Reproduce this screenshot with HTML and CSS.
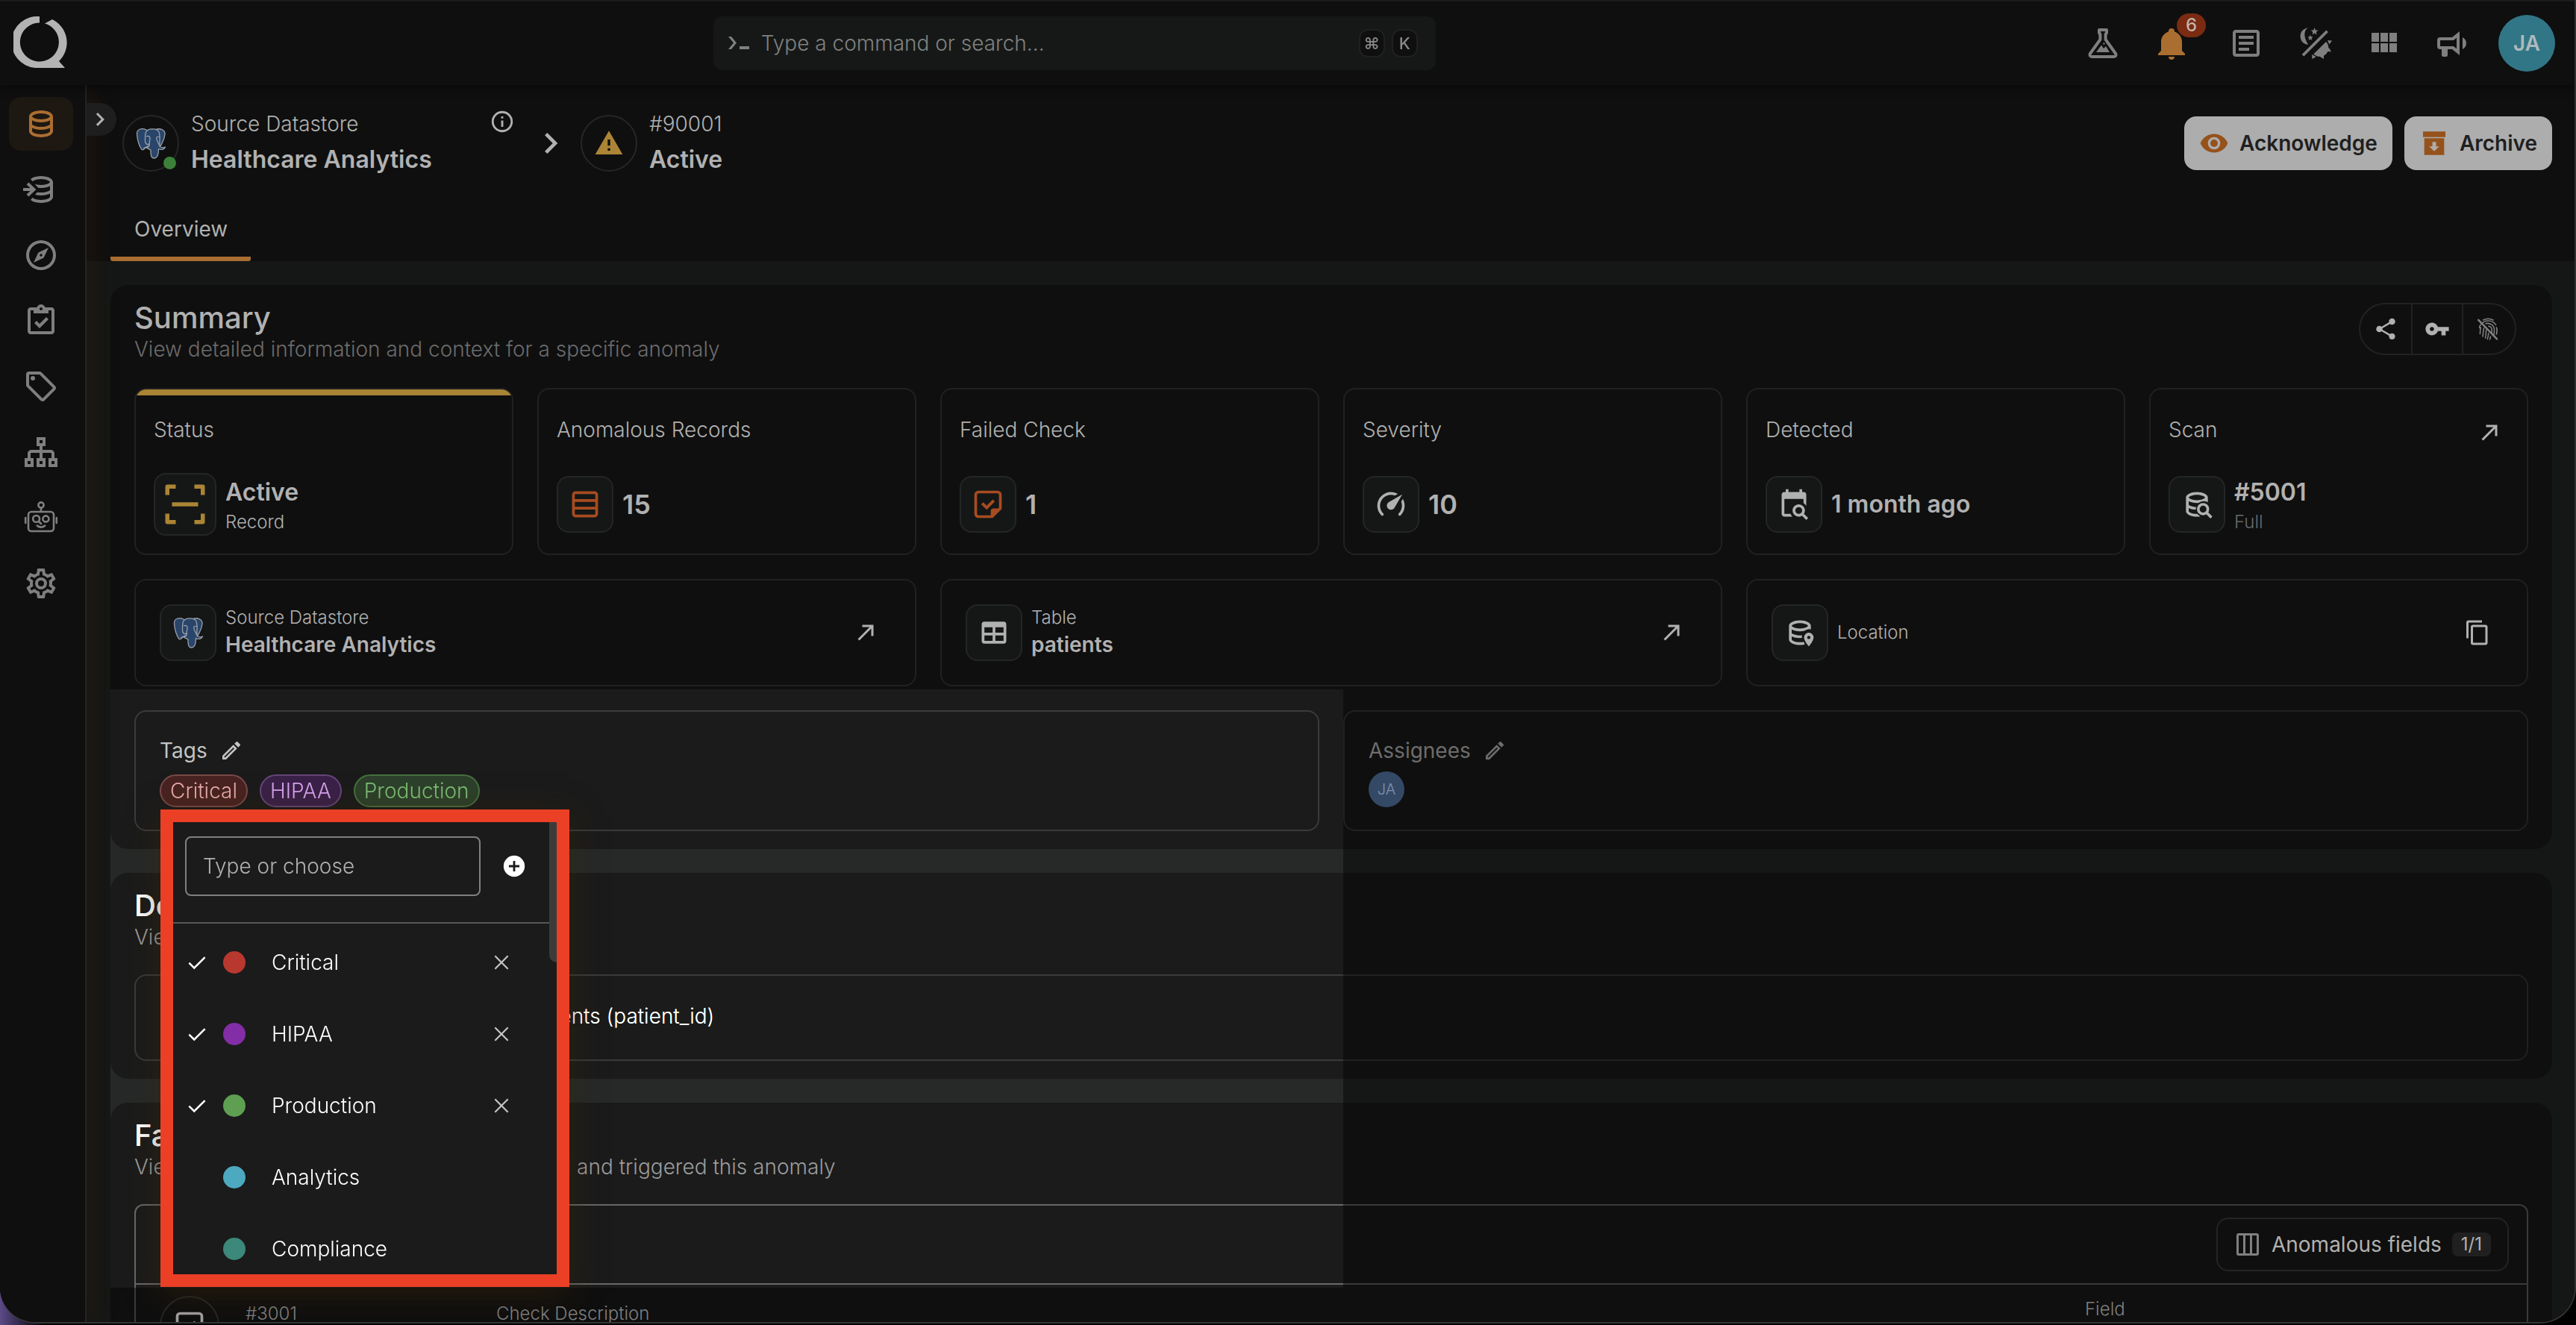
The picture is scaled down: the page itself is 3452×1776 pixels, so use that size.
FILE: index.html
```html
<!DOCTYPE html>
<html lang="en">
<head>
  <meta charset="UTF-8" />
  <meta name="viewport" content="width=device-width, initial-scale=1.0" />
  <title>Anomaly #90001</title>
  <link rel="stylesheet" href="styles.css">
</head>
<body>
  <!-- Icon sprite -->
  <svg class="sprite" aria-hidden="true">
    <symbol id="i-database" viewBox="0 0 24 24"><path d="M12 3C7.58 3 4 4.79 4 7V17C4 19.21 7.59 21 12 21S20 19.21 20 17V7C20 4.79 16.42 3 12 3M18 17C18 17.5 15.87 19 12 19S6 17.5 6 17V14.77C7.61 15.55 9.72 16 12 16S16.39 15.55 18 14.77V17M18 12.45C16.7 13.4 14.42 14 12 14C9.58 14 7.3 13.4 6 12.45V9.64C7.47 10.47 9.61 11 12 11C14.39 11 16.53 10.47 18 9.64V12.45M12 9C8.13 9 6 7.5 6 7S8.13 5 12 5C15.87 5 18 6.5 18 7S15.87 9 12 9Z"/></symbol>
    <symbol id="i-database-in" viewBox="0 0 24 24">
      <mask id="m-in"><rect width="24" height="24" fill="#fff"/><path d="M0 4.5L5 5L11 12L5 19L0 19.5Z" fill="#000"/></mask>
      <path mask="url(#m-in)" d="M12 3C7.58 3 4 4.79 4 7V17C4 19.21 7.59 21 12 21S20 19.21 20 17V7C20 4.79 16.42 3 12 3M18 17C18 17.5 15.87 19 12 19S6 17.5 6 17V14.77C7.61 15.55 9.72 16 12 16S16.39 15.55 18 14.77V17M18 12.45C16.7 13.4 14.42 14 12 14C9.58 14 7.3 13.4 6 12.45V9.64C7.47 10.47 9.61 11 12 11C14.39 11 16.53 10.47 18 9.64V12.45M12 9C8.13 9 6 7.5 6 7S8.13 5 12 5C15.87 5 18 6.5 18 7S15.87 9 12 9Z"/>
      <path d="M0 11H4.8L2.3 8.7L3.7 7.3L8.7 12L3.7 16.7L2.3 15.3L4.8 13H0Z"/>
    </symbol>
    <symbol id="i-compass" viewBox="0 0 24 24"><path d="M7,17L10.2,10.2L17,7L13.8,13.8L7,17M12,11.1A0.9,0.9 0 0,0 11.1,12A0.9,0.9 0 0,0 12,12.9A0.9,0.9 0 0,0 12.9,12A0.9,0.9 0 0,0 12,11.1M12,2A10,10 0 0,1 22,12A10,10 0 0,1 12,22A10,10 0 0,1 2,12A10,10 0 0,1 12,2M12,4A8,8 0 0,0 4,12A8,8 0 0,0 12,20A8,8 0 0,0 20,12A8,8 0 0,0 12,4Z"/></symbol>
    <symbol id="i-clipboard" viewBox="0 0 24 24"><path d="M19 3H14.82C14.4 1.84 13.3 1 12 1S9.6 1.84 9.18 3H5C3.9 3 3 3.9 3 5V19C3 20.1 3.9 21 5 21H19C20.1 21 21 20.1 21 19V5C21 3.9 20.1 3 19 3M12 3C12.55 3 13 3.45 13 4S12.55 5 12 5 11 4.55 11 4 11.45 3 12 3M7 7H17V5H19V19H5V5H7V7M7.5 13.5L9 12L11 14L15.5 9.5L17 11L11 17L7.5 13.5Z"/></symbol>
    <symbol id="i-tag" viewBox="0 0 24 24"><path d="M21.41 11.58L12.41 2.58A2 2 0 0 0 11 2H4A2 2 0 0 0 2 4V11A2 2 0 0 0 2.59 12.42L11.59 21.42A2 2 0 0 0 13 22A2 2 0 0 0 14.41 21.41L21.41 14.41A2 2 0 0 0 22 13A2 2 0 0 0 21.41 11.58M13 20L4 11V4H11L20 13M6.5 5A1.5 1.5 0 1 1 5 6.5A1.5 1.5 0 0 1 6.5 5Z"/></symbol>
    <symbol id="i-sitemap" viewBox="0 0 24 24"><path fill="none" stroke="currentColor" stroke-width="2" d="M10 3H14V7H10ZM2 17H6V21H2ZM10 17H14V21H10ZM18 17H22V21H18ZM12 7V17M4 17V13A1.5 1.5 0 0 1 5.500 11.500H18.500A1.500 1.500 0 0 1 20 13V17"/></symbol>
    <symbol id="i-robot" viewBox="0 0 24 24"><g fill="none" stroke="currentColor" stroke-width="1.300"><rect x="3.500" y="8" width="17" height="13" rx="2"/><circle cx="12" cy="3.500" r="1.800"/><path d="M12 5.500V8M9.400 17.300Q12 19.300 14.600 17.300M1.600 12V15.500M22.400 12V15.500M10.500 14.500L12 16" stroke-linecap="round"/><circle cx="8.800" cy="12.700" r="2.200"/><circle cx="15.200" cy="12.700" r="2"/></g></symbol>
    <symbol id="i-cog" viewBox="0 0 24 24"><path d="M12,8A4,4 0 0,1 16,12A4,4 0 0,1 12,16A4,4 0 0,1 8,12A4,4 0 0,1 12,8M12,10A2,2 0 0,0 10,12A2,2 0 0,0 12,14A2,2 0 0,0 14,12A2,2 0 0,0 12,10M10,22C9.75,22 9.54,21.82 9.5,21.58L9.13,18.93C8.5,18.68 7.96,18.34 7.44,17.94L4.95,18.95C4.73,19.03 4.46,18.95 4.34,18.73L2.34,15.27C2.21,15.05 2.27,14.78 2.46,14.63L4.57,12.97L4.5,12L4.57,11L2.46,9.37C2.27,9.22 2.21,8.95 2.34,8.73L4.34,5.27C4.46,5.05 4.73,4.96 4.95,5.05L7.44,6.05C7.96,5.66 8.5,5.32 9.13,5.07L9.5,2.42C9.54,2.18 9.75,2 10,2H14C14.25,2 14.46,2.18 14.5,2.42L14.87,5.07C15.5,5.32 16.04,5.66 16.56,6.05L19.05,5.05C19.27,4.96 19.54,5.05 19.66,5.27L21.66,8.73C21.79,8.95 21.73,9.22 21.54,9.37L19.43,11L19.5,12L19.43,13L21.54,14.63C21.73,14.78 21.79,15.05 21.66,15.27L19.66,18.73C19.54,18.95 19.27,19.04 19.05,18.95L16.56,17.95C16.04,18.34 15.5,18.68 14.87,18.93L14.5,21.58C14.46,21.82 14.25,22 14,22H10M11.25,4L10.88,6.61C9.68,6.86 8.62,7.5 7.85,8.39L5.44,7.35L4.69,8.65L6.8,10.2C6.4,11.37 6.4,12.64 6.8,13.8L4.68,15.36L5.43,16.66L7.86,15.62C8.63,16.5 9.68,17.14 10.87,17.38L11.24,20H12.76L13.13,17.39C14.32,17.14 15.37,16.5 16.14,15.62L18.57,16.66L19.32,15.36L17.2,13.81C17.6,12.64 17.6,11.37 17.2,10.2L19.31,8.65L18.56,7.35L16.15,8.39C15.38,7.5 14.32,6.86 13.12,6.62L12.75,4H11.25Z"/></symbol>
    <symbol id="i-flask" viewBox="0 0 24 24"><path fill="none" stroke="currentColor" stroke-width="2" stroke-linejoin="round" d="M9.500 3H14.500V5L13.800 6V9.500L20.600 19A1.300 1.300 0 0 1 19.500 21H4.500A1.300 1.300 0 0 1 3.400 19L10.200 9.500V6L9.500 5Z"/><path d="M7.500 18L11 13.200L12.500 15.500L14 14L16.500 18Z"/><circle cx="12.700" cy="12.300" r=".6"/></symbol>
    <symbol id="i-bell" viewBox="0 0 24 24"><path d="M21,19V20H3V19L5,17V11C5,7.9 7.03,5.17 10,4.29C10,4.19 10,4.1 10,4A2,2 0 0,1 12,2A2,2 0 0,1 14,4C14,4.1 14,4.19 14,4.29C16.97,5.17 19,7.9 19,11V17L21,19M14,21A2,2 0 0,1 12,23A2,2 0 0,1 10,21"/></symbol>
    <symbol id="i-text-box" viewBox="0 0 24 24"><path d="M5,3C3.89,3 3,3.89 3,5V19C3,20.11 3.89,21 5,21H19C20.11,21 21,20.11 21,19V5C21,3.89 20.11,3 19,3H5M5,5H19V19H5V5M7,7V9H17V7H7M7,11V13H17V11H7M7,15V17H14V15H7Z"/></symbol>
    <symbol id="i-theme" viewBox="0 0 24 24"><path d="M19.600 3.200L21 4.500L4.700 20.800L3.300 19.500ZM7.500 1.800C4.500 3.200 4.300 8 7.600 12.800C4.500 12.800 2.300 10.300 2.300 7.200C2.300 4.200 4.600 1.900 7.500 1.800ZM11.800 1.500L12.500 3.200L14.300 3.300L12.900 4.500L13.300 6.200L11.800 5.300L10.300 6.200L10.700 4.500L9.300 3.300L11.100 3.200ZM9 6.300L9.500 7.600L10.900 7.700L9.800 8.600L10.200 10L9 9.200L7.800 10L8.200 8.600L7.100 7.700L8.500 7.600ZM19.500 11A5.600 5.600 0 0 1 11.200 19.200ZM20.500 10L23.500 10.200L21.700 12.800ZM21.500 15L23 17.800L19.900 17.300ZM10 19.500L12.800 21L10.300 22.600ZM15 20.700L18 19.200V22.500Z"/></symbol>
    <symbol id="i-module" viewBox="0 0 24 24"><path d="M16,5V11H21V5M10,11H15V5H10M16,18H21V12H16M10,18H15V12H10M4,18H9V12H4M4,11H9V5H4V11Z"/></symbol>
    <symbol id="i-bullhorn" viewBox="0 0 24 24"><path d="M12 8H4A2 2 0 0 0 2 10V14A2 2 0 0 0 4 16H5V20A1 1 0 0 0 6 21H8A1 1 0 0 0 9 20V16H12L17 20V4L12 8M15 15.6L13 14H4V10H13L15 8.4V15.6M21.5 12C21.5 13.71 20.54 15.26 19 16V8C20.53 8.75 21.5 10.3 21.5 12Z"/></symbol>
    <symbol id="i-chevron" viewBox="0 0 24 24"><path d="M8.59,16.58L13.17,12L8.59,7.41L10,6L16,12L10,18L8.59,16.58Z"/></symbol>
    <symbol id="i-info" viewBox="0 0 24 24"><circle cx="12" cy="12" r="9" fill="none" stroke="currentColor" stroke-width="2"/><path d="M11 7H13V9H11ZM11 11H13V17H11Z"/></symbol>
    <symbol id="i-alert" viewBox="0 0 24 24"><path d="M13 14H11V9H13M13 18H11V16H13M1 21H23L12 2L1 21Z"/></symbol>
    <symbol id="i-eye" viewBox="0 0 24 24"><path d="M12,9A3,3 0 0,0 9,12A3,3 0 0,0 12,15A3,3 0 0,0 15,12A3,3 0 0,0 12,9M12,17A5,5 0 0,1 7,12A5,5 0 0,1 12,7A5,5 0 0,1 17,12A5,5 0 0,1 12,17M12,4.5C7,4.5 2.73,7.61 1,12C2.73,16.39 7,19.5 12,19.5C17,19.5 21.27,16.39 23,12C21.27,7.61 17,4.5 12,4.5Z"/></symbol>
    <symbol id="i-archive" viewBox="0 0 24 24"><path fill-rule="evenodd" d="M3 2.500H21V7H3ZM4 8H20V21.500H4ZM10.500 11V14.500H8L12 18.500L16 14.500H13.500V11Z"/></symbol>
    <symbol id="i-share" viewBox="0 0 24 24"><path d="M18,16.08C17.24,16.08 16.56,16.38 16.04,16.85L8.91,12.7C8.96,12.47 9,12.24 9,12C9,11.76 8.96,11.53 8.91,11.3L15.96,7.19C16.5,7.69 17.21,8 18,8A3,3 0 0,0 21,5A3,3 0 0,0 18,2A3,3 0 0,0 15,5C15,5.24 15.04,5.47 15.09,5.7L8.04,9.81C7.5,9.31 6.79,9 6,9A3,3 0 0,0 3,12A3,3 0 0,0 6,15C6.79,15 7.5,14.69 8.04,14.19L15.16,18.34C15.11,18.55 15.08,18.77 15.08,19C15.08,20.61 16.39,21.91 18,21.91C19.61,21.91 20.92,20.61 20.92,19A2.92,2.92 0 0,0 18,16.08Z"/></symbol>
    <symbol id="i-key" viewBox="0 0 24 24"><path d="M7 14C5.9 14 5 13.1 5 12S5.9 10 7 10 9 10.9 9 12 8.1 14 7 14M12.6 10C11.8 7.7 9.6 6 7 6C3.7 6 1 8.7 1 12S3.7 18 7 18C9.6 18 11.8 16.3 12.6 14H16V18H20V14H23V10H12.6Z"/></symbol>
    <symbol id="i-fingerprint-off" viewBox="0 0 24 24"><g fill="none" stroke="currentColor" stroke-width="1.100" stroke-linecap="round"><path d="M7.500 3.500C10.500 2 14 2 17 3.500M5.500 7.500C9 3 16 3 19.500 8M20 10.500C21 13 20.500 15.500 20 17M4 11C4 9.500 4.500 8.500 5 8M4.500 16.500C4.800 14.500 4.500 12.500 5.200 10.500M10 6.800C14 6 18 8.500 18 13C18 15 17.800 16.500 17.500 18M7 19C8 16 7 13.500 8.300 11M12.500 9.300C14.500 9.500 15.700 11 15.700 13C15.700 14 15.700 15 15.500 16M9.500 20.500C10.500 18 10 15.500 10.300 13M12.500 16C12.400 18 12 20 11.500 21.500M14.500 19C14.300 20 14 21 13.800 21.800"/><path stroke-width="1.800" d="M3 3.500L20.500 21.500"/></g></symbol>
    <symbol id="i-arrow" viewBox="0 0 24 24"><path d="M5,17.59L15.59,7H9V5H19V15H17V8.41L6.41,19L5,17.59Z"/></symbol>
    <symbol id="i-copy" viewBox="0 0 24 24"><path d="M19,21H8V7H19M19,5H8A2,2 0 0,0 6,7V21A2,2 0 0,0 8,23H19A2,2 0 0,0 21,21V7A2,2 0 0,0 19,5M16,1H4A2,2 0 0,0 2,3V17H4V3H16V1Z"/></symbol>
    <symbol id="i-pencil" viewBox="0 0 24 24"><path d="M14.06,9L15,9.94L5.92,19H5V18.08L14.06,9M17.66,3C17.41,3 17.15,3.1 16.96,3.29L15.13,5.12L18.88,8.87L20.71,7.04C21.1,6.65 21.1,6 20.71,5.63L18.37,3.29C18.17,3.09 17.92,3 17.66,3M14.06,6.19L3,17.25V21H6.75L17.81,9.94L14.06,6.19Z"/></symbol>
    <symbol id="i-table" viewBox="0 0 24 24"><path d="M5,4H19A2,2 0 0,1 21,6V18A2,2 0 0,1 19,20H5A2,2 0 0,1 3,18V6A2,2 0 0,1 5,4M5,8V12H11V8H5M13,8V12H19V8H13M5,14V18H11V14H5M13,14V18H19V14H13Z"/></symbol>
    <symbol id="i-scan" viewBox="0 0 24 24"><path fill="none" stroke="currentColor" stroke-width="2.200" stroke-linejoin="round" d="M2.500 7V2.500H7M17 2.500H21.500V7M21.500 17V21.500H17M7 21.500H2.500V17M5 12H19"/></symbol>
    <symbol id="i-rows" viewBox="0 0 24 24"><path fill="none" stroke="currentColor" stroke-width="2" d="M3.500 5A1.500 1.500 0 0 1 5 3.500H19A1.500 1.500 0 0 1 20.500 5V19A1.500 1.500 0 0 1 19 20.500H5A1.500 1.500 0 0 1 3.500 19ZM3.500 9.200H20.500M3.500 14.800H20.500"/></symbol>
    <symbol id="i-note-check" viewBox="0 0 24 24"><path fill="none" stroke="currentColor" stroke-width="2" d="M3 5A2 2 0 0 1 5 3H19A2 2 0 0 1 21 5V15L15 21H5A2 2 0 0 1 3 19Z"/><path d="M14 22V17A2 2 0 0 1 16 15H22ZM7 12L8.500 10.500L11 13L15.500 8.500L17 10L11 16Z"/></symbol>
    <symbol id="i-speed" viewBox="0 0 24 24"><path transform="matrix(-1 0 0 1 24 0)" d="M12 16C13.66 16 15 14.66 15 13C15 11.88 14.39 10.9 13.5 10.39L3.79 4.77L9.32 14.35C9.82 15.33 10.83 16 12 16M12 3C10.19 3 8.5 3.5 7.03 4.32L9.13 5.53C10 5.19 11 5 12 5C16.42 5 20 8.58 20 13C20 15.21 19.11 17.21 17.66 18.65H17.65C17.26 19.04 17.26 19.67 17.65 20.06C18.04 20.45 18.68 20.45 19.07 20.07C20.88 18.26 22 15.76 22 13C22 7.5 17.5 3 12 3M2 13C2 15.76 3.12 18.26 4.93 20.07C5.32 20.45 5.95 20.45 6.34 20.06C6.73 19.67 6.73 19.04 6.34 18.65C4.89 17.2 4 15.21 4 13C4 12 4.19 11 4.54 10.1L3.33 8C2.5 9.5 2 11.18 2 13Z"/></symbol>
    <symbol id="i-calendar-search" viewBox="0 0 24 24"><path d="M15.5,12C18,12 20,14 20,16.5C20,17.38 19.75,18.21 19.31,18.9L22.39,22L21,23.39L17.88,20.32C17.19,20.75 16.37,21 15.5,21C13,21 11,19 11,16.5C11,14 13,12 15.5,12M15.5,14A2.5,2.5 0 0,0 13,16.5A2.5,2.5 0 0,0 15.5,19A2.5,2.5 0 0,0 18,16.5A2.5,2.5 0 0,0 15.5,14M19,8H5V19H9.5C9.81,19.75 10.26,20.42 10.81,21H5C3.89,21 3,20.1 3,19V5C3,3.89 3.89,3 5,3H6V1H8V3H16V1H18V3H19A2,2 0 0,1 21,5V13.03C20.5,12.22 19.8,11.54 19,11V8Z"/></symbol>
    <symbol id="i-database-search" viewBox="0 0 24 24">
      <mask id="m-search"><rect width="24" height="24" fill="#fff"/><circle cx="17" cy="15.500" r="5.800" fill="#000"/><path d="M15 17H24V24H14Z" fill="#000"/></mask>
      <path mask="url(#m-search)" d="M12 3C7.58 3 4 4.79 4 7V17C4 19.21 7.59 21 12 21S20 19.21 20 17V7C20 4.79 16.42 3 12 3M18 17C18 17.5 15.87 19 12 19S6 17.5 6 17V14.77C7.61 15.55 9.72 16 12 16S16.39 15.55 18 14.77V17M18 12.45C16.7 13.4 14.42 14 12 14C9.58 14 7.3 13.4 6 12.45V9.64C7.47 10.47 9.61 11 12 11C14.39 11 16.53 10.47 18 9.64V12.45M12 9C8.13 9 6 7.5 6 7S8.13 5 12 5C15.87 5 18 6.5 18 7S15.87 9 12 9Z"/>
      <path fill="none" stroke="currentColor" stroke-width="2" d="M20 15.500A3.500 3.500 0 1 1 13 15.500A3.500 3.500 0 1 1 20 15.500M19 18L22.600 21.600"/>
    </symbol>
    <symbol id="i-database-marker" viewBox="0 0 24 24">
      <mask id="m-marker"><rect width="24" height="24" fill="#fff"/><path d="M13.500 15.500A5 5 0 0 1 24 14V24H17Z" fill="#000"/></mask>
      <path mask="url(#m-marker)" d="M12 3C7.58 3 4 4.79 4 7V17C4 19.21 7.59 21 12 21S20 19.21 20 17V7C20 4.79 16.42 3 12 3M18 17C18 17.5 15.87 19 12 19S6 17.5 6 17V14.77C7.61 15.55 9.72 16 12 16S16.39 15.55 18 14.77V17M18 12.45C16.7 13.4 14.42 14 12 14C9.58 14 7.3 13.4 6 12.45V9.64C7.47 10.47 9.61 11 12 11C14.39 11 16.53 10.47 18 9.64V12.45M12 9C8.13 9 6 7.5 6 7S8.13 5 12 5C15.87 5 18 6.5 18 7S15.87 9 12 9Z"/>
      <path fill-rule="evenodd" d="M18.500 12A3.500 3.500 0 0 0 15 15.500C15 18 18.500 22 18.500 22S22 18 22 15.500A3.500 3.500 0 0 0 18.500 12M18.500 14.300A1.200 1.200 0 1 1 18.500 16.700A1.200 1.200 0 1 1 18.500 14.300"/>
    </symbol>
    <symbol id="i-columns" viewBox="0 0 24 24"><path fill="none" stroke="currentColor" stroke-width="2" d="M3 4A1 1 0 0 1 4 3H20A1 1 0 0 1 21 4V20A1 1 0 0 1 20 21H4A1 1 0 0 1 3 20ZM9 3V21M15 3V21"/></symbol>
    <symbol id="i-check" viewBox="0 0 24 24"><path fill="none" stroke="currentColor" stroke-width="2" d="M3.500 12.500L9 18L20.500 6.500"/></symbol>
    <symbol id="i-close" viewBox="0 0 24 24"><path fill="none" stroke="currentColor" stroke-width="2" d="M4 4L20 20M20 4L4 20"/></symbol>
    <symbol id="i-plus-circle" viewBox="0 0 24 24"><path d="M17,13H13V17H11V13H7V11H11V7H13V11H17M12,2A10,10 0 0,0 2,12A10,10 0 0,0 12,22A10,10 0 0,0 22,12A10,10 0 0,0 12,2Z"/></symbol>
    <symbol id="i-prompt" viewBox="0 0 28 20"><path d="M0 1H4L11 9.500L4 18H0L7 9.500ZM15 14H28V18H15Z"/></symbol>
    <symbol id="i-postgres" viewBox="0 0 40 42">
      <g fill="#29456b" stroke="#9aa0a8" stroke-width="1.300" stroke-linejoin="round">
        <path d="M14 3C8 0 1 2 1.500 9C2 17 5 26 8 29.500C10 31 12 28 13.500 26.500L18 24L17 4Z"/>
        <path d="M26 3C32 0 39.500 3 39 9C38.500 15 34 24 31 28L26 20Z"/>
        <path d="M13.500 6C16 1 28 0 31 6C33 11 31.500 18 32 25.500C36 27.500 38 27 39.500 26C38 30 33 30 30.500 28.500C30.500 34 30 40 25.500 41C20 41.500 20 36 20 30C18 29 15 28 13.500 26.500C17 27 18.500 25 18 22C14 24 12 20 12.500 16C12.500 12 12.500 9 13.500 6Z"/>
        <path fill="none" d="M14 12C17 10.500 19.500 12 19 15.500C18.500 19 17.500 20 18.500 23M27.500 13.500C29 12 31 12 32 13M27.500 13.500C28 18 30 20 31.500 24M10 28L14 26"/>
      </g>
    </symbol>
    <symbol id="i-logo" viewBox="0 0 72 72"><path d="M35 0V8.500A26 26 0 1 0 42 9.500L52 4A34.500 34.500 0 0 1 61 60L69 69H29A34.500 34.500 0 0 1 35 0Z"/></symbol>
  </svg>

  <div class="window">
    <header class="topbar">
      <a class="logo" href="#" aria-label="Home"><svg><use href="#i-logo"/></svg></a>
      <label class="search">
        <svg><use href="#i-prompt"/></svg>
        <input type="text" placeholder="Type a command or search..." />
        <kbd>⌘</kbd><kbd>K</kbd>
      </label>
      <nav class="top-actions">
        <button class="icon-btn" aria-label="Labs"><svg><use href="#i-flask"/></svg></button>
        <button class="icon-btn alert" aria-label="Notifications"><svg><use href="#i-bell"/></svg><span class="badge">6</span></button>
        <button class="icon-btn" aria-label="Docs"><svg><use href="#i-text-box"/></svg></button>
        <button class="icon-btn" aria-label="Theme"><svg><use href="#i-theme"/></svg></button>
        <button class="icon-btn" aria-label="Apps"><svg><use href="#i-module"/></svg></button>
        <button class="icon-btn" aria-label="News"><svg><use href="#i-bullhorn"/></svg></button>
        <button class="avatar">JA</button>
      </nav>
    </header>

    <div class="layout">
      <nav class="sidebar">
        <a class="active" href="#" aria-label="Datastores"><svg><use href="#i-database"/></svg></a>
        <a href="#" aria-label="Enrichment"><svg><use href="#i-database-in"/></svg></a>
        <a href="#" aria-label="Explore"><svg><use href="#i-compass"/></svg></a>
        <a href="#" aria-label="Checks"><svg><use href="#i-clipboard"/></svg></a>
        <a href="#" aria-label="Tags"><svg><use href="#i-tag"/></svg></a>
        <a href="#" aria-label="Flows"><svg><use href="#i-sitemap"/></svg></a>
        <a href="#" aria-label="Agent"><svg><use href="#i-robot"/></svg></a>
        <a href="#" aria-label="Settings"><svg><use href="#i-cog"/></svg></a>
        <button class="expander" aria-label="Expand"><svg><use href="#i-chevron"/></svg></button>
      </nav>

      <main class="main">
        <div class="page-head">
          <div class="crumbs">
            <span class="ring"><svg class="pg"><use href="#i-postgres"/></svg><i class="online"></i></span>
            <div class="crumb crumb-store">
              <span>Source Datastore</span>
              <strong>Healthcare Analytics</strong>
            </div>
            <svg class="info"><use href="#i-info"/></svg>
            <svg class="sep"><use href="#i-chevron"/></svg>
            <span class="ring warn"><svg><use href="#i-alert"/></svg></span>
            <div class="crumb">
              <span>#90001</span>
              <strong>Active</strong>
            </div>
            <div class="head-actions">
              <button><svg><use href="#i-eye"/></svg>Acknowledge</button>
              <button><svg><use href="#i-archive"/></svg>Archive</button>
            </div>
          </div>
          <div class="tabs"><a href="#">Overview</a></div>
        </div>

        <div class="content">
          <section class="card summary">
            <div class="card-head">
              <div>
                <h2>Summary</h2>
                <p>View detailed information and context for a specific anomaly</p>
              </div>
              <div class="btn-group">
                <button aria-label="Share"><svg><use href="#i-share"/></svg></button>
                <button aria-label="Key"><svg><use href="#i-key"/></svg></button>
                <button class="off" aria-label="Fingerprint"><svg><use href="#i-fingerprint-off"/></svg></button>
              </div>
            </div>

            <div class="grid stats">
              <div class="panel stat status">
                <span class="label">Status</span>
                <div class="value">
                  <span class="tile yellow"><svg><use href="#i-scan"/></svg></span>
                  <div class="lines"><strong>Active</strong><small>Record</small></div>
                </div>
              </div>
              <div class="panel stat">
                <span class="label">Anomalous Records</span>
                <div class="value"><span class="tile orange"><svg><use href="#i-rows"/></svg></span><strong class="num">15</strong></div>
              </div>
              <div class="panel stat">
                <span class="label">Failed Check</span>
                <div class="value"><span class="tile orange"><svg><use href="#i-note-check"/></svg></span><strong class="num">1</strong></div>
              </div>
              <div class="panel stat">
                <span class="label">Severity</span>
                <div class="value"><span class="tile"><svg><use href="#i-speed"/></svg></span><strong class="num">10</strong></div>
              </div>
              <div class="panel stat">
                <span class="label">Detected</span>
                <div class="value"><span class="tile"><svg><use href="#i-calendar-search"/></svg></span><strong>1 month ago</strong></div>
              </div>
              <div class="panel stat">
                <span class="label">Scan <a href="#" aria-label="Open scan"><svg><use href="#i-arrow"/></svg></a></span>
                <div class="value">
                  <span class="tile"><svg><use href="#i-database-search"/></svg></span>
                  <div class="lines"><strong>#5001</strong><small class="dim">Full</small></div>
                </div>
              </div>
            </div>

            <div class="grid links">
              <div class="panel link">
                <span class="tile"><svg class="pg"><use href="#i-postgres"/></svg></span>
                <div class="lines"><small>Source Datastore</small><strong>Healthcare Analytics</strong></div>
                <a href="#" aria-label="Open datastore"><svg><use href="#i-arrow"/></svg></a>
              </div>
              <div class="panel link">
                <span class="tile"><svg><use href="#i-table"/></svg></span>
                <div class="lines"><small>Table</small><strong>patients</strong></div>
                <a href="#" aria-label="Open table"><svg><use href="#i-arrow"/></svg></a>
              </div>
              <div class="panel link">
                <span class="tile"><svg><use href="#i-database-marker"/></svg></span>
                <div class="lines"><small>Location</small></div>
                <button aria-label="Copy location"><svg><use href="#i-copy"/></svg></button>
              </div>
            </div>

            <div class="grid people">
              <div class="panel field">
                <div class="field-head">Tags <button aria-label="Edit tags"><svg><use href="#i-pencil"/></svg></button></div>
                <div class="chips">
                  <span class="chip red">Critical</span>
                  <span class="chip purple">HIPAA</span>
                  <span class="chip green">Production</span>
                </div>

                <!-- Tag picker -->
                <div class="picker">
                  <div class="picker-search">
                    <input type="text" placeholder="Type or choose" aria-label="Type or choose" />
                    <button aria-label="Add tag"><svg><use href="#i-plus-circle"/></svg></button>
                  </div>
                  <ul>
                    <li><svg class="tick"><use href="#i-check"/></svg><i class="dot red"></i>Critical<button aria-label="Remove Critical"><svg><use href="#i-close"/></svg></button></li>
                    <li><svg class="tick"><use href="#i-check"/></svg><i class="dot purple"></i>HIPAA<button aria-label="Remove HIPAA"><svg><use href="#i-close"/></svg></button></li>
                    <li><svg class="tick"><use href="#i-check"/></svg><i class="dot green"></i>Production<button aria-label="Remove Production"><svg><use href="#i-close"/></svg></button></li>
                    <li><span class="tick"></span><i class="dot cyan"></i>Analytics</li>
                    <li><span class="tick"></span><i class="dot teal"></i>Compliance</li>
                  </ul>
                  <span class="thumb"></span>
                </div>
              </div>
              <div class="panel field assignees">
                <div class="field-head">Assignees <button aria-label="Edit assignees"><svg><use href="#i-pencil"/></svg></button></div>
                <span class="mini-avatar">JA</span>
              </div>
            </div>
          </section>

          <section class="card">
            <div class="card-head">
              <div>
                <h2>Description</h2>
                <p>View the description</p>
              </div>
            </div>
            <div class="panel description">patients (patient_id)</div>
          </section>

          <section class="card checks">
            <div class="card-head">
              <div>
                <h2>Failed Checks</h2>
                <p>View the list of data quality checks that failed and triggered this anomaly</p>
              </div>
            </div>
            <div class="check-list">
              <div class="toolbar">
                <button><svg><use href="#i-columns"/></svg>Anomalous fields<span>1/1</span></button>
              </div>
              <div class="check">
                <span class="ring"><svg><use href="#i-note-check"/></svg></span>
                <span class="check-id">#3001</span>
                <span class="check-desc">Check Description</span>
                <span class="check-field">Field</span>
              </div>
            </div>
          </section>

          <div class="spotlight"></div>
        </div>
      </main>
    </div>
  </div>
</body>
</html>
```
FILE: styles.css
```css
* {
  box-sizing: border-box;
}

body {
  margin: 0;
  height: 100vh;
  overflow: hidden;
  background: linear-gradient(90deg, #5b4a86 0, #000 60px);
  color: #b1b1b1;
  font-family: Inter, "Liberation Sans", sans-serif;
  font-size: 28px;
  line-height: 36px;
  font-weight: 300;
}

.sprite {
  position: absolute;
  width: 0;
  height: 0;
}

svg {
  display: block;
  flex: none;
  fill: currentColor;
}

button {
  display: flex;
  align-items: center;
  padding: 0;
  border: none;
  background: none;
  color: inherit;
  font: inherit;
  cursor: pointer;
}

a {
  color: inherit;
  text-decoration: none;
}

input {
  min-width: 0;
  border: none;
  outline: none;
  background: none;
  color: inherit;
  font: inherit;
}

strong {
  font-weight: 600;
}

.window {
  display: flex;
  flex-direction: column;
  height: calc(100vh - 2px);
  overflow: hidden;
  background: #0f0f0f;
  border-right: 2px solid #303030;
  border-bottom: 2px solid #353535;
  border-radius: 0 0 48px 48px;
}

/* Top bar */
.topbar {
  position: relative;
  z-index: 5;
  flex: none;
  display: grid;
  grid-template-columns: 15fr 968px 24fr;
  align-items: center;
  height: 114px;
  padding: 0 26px 0 18px;
  border-top: 2px solid #1b1b1b;
  background: #0f0f0f;
  box-shadow: 0 4px 12px rgba(0, 0, 0, 0.4);
}

.logo {
  justify-self: start;
  color: #b3b3b3;
}

.logo svg {
  width: 72px;
  height: 72px;
}

.search {
  display: flex;
  align-items: center;
  gap: 9px;
  height: 72px;
  padding: 0 24px 0 20px;
  border-radius: 12px;
  background: #161817;
  color: #7f8180;
}

.search svg {
  width: 28px;
  height: 20px;
  margin-right: 7px;
}

.search input {
  flex: 1;
  padding: 0;
}

input::placeholder {
  color: inherit;
  opacity: 1;
}

kbd {
  width: 35px;
  height: 38px;
  border: 2px solid #202020;
  border-radius: 12px;
  background: #0f0f0f;
  color: #8a8a8a;
  font-family: Inter, "DejaVu Sans", sans-serif;
  font-size: 22px;
  font-weight: 500;
  line-height: 34px;
  text-align: center;
}

.top-actions {
  justify-self: end;
  display: flex;
  align-items: center;
  gap: 44px;
  color: #7f7f7f;
}

.icon-btn {
  position: relative;
}

.icon-btn svg {
  width: 48px;
  height: 48px;
}

.icon-btn.alert {
  margin-right: 8px;
  color: #ab6e31;
}

.badge {
  position: absolute;
  top: -16px;
  left: 31px;
  width: 39px;
  height: 32px;
  border-radius: 16px;
  background: #7a2b11;
  color: #c4b4ae;
  font-size: 24px;
  font-weight: 500;
  line-height: 32px;
  text-align: center;
}

.avatar {
  justify-content: center;
  width: 76px;
  height: 76px;
  margin-left: -6px;
  border-radius: 50%;
  background: #317687;
  color: #adb9bc;
  font-weight: 600;
}

/* Sidebar */
.layout {
  flex: 1;
  display: flex;
  min-height: 0;
}

.sidebar {
  position: relative;
  z-index: 4;
  flex: none;
  display: flex;
  flex-direction: column;
  gap: 16px;
  width: 116px;
  padding: 16px 16px 0 12px;
  border-right: 2px solid #232323;
  background: #0f0f0f;
  box-shadow: 8px 0 30px rgba(50, 30, 12, 0.4);
  color: #7f7f7f;
}

.sidebar a {
  display: flex;
  align-items: center;
  justify-content: center;
  height: 72px;
  border-radius: 16px;
}

.sidebar a svg {
  width: 48px;
  height: 48px;
}

.sidebar a.active {
  background: #1e1812;
  color: #ab6e31;
}

.expander {
  position: absolute;
  top: 24px;
  left: 116px;
  width: 40px;
  height: 44px;
  border-radius: 0 22px 22px 0;
  background: #1e1e1e;
  color: #b1b1b1;
}

.expander svg {
  width: 36px;
  height: 36px;
}

.main {
  flex: 1;
  display: flex;
  flex-direction: column;
  min-width: 0;
}

/* Breadcrumb header */
.page-head {
  flex: none;
  padding: 36px 30px 0 32px;
}

.crumbs {
  display: flex;
  align-items: center;
  height: 84px;
  padding-left: 16px;
}

.ring {
  position: relative;
  flex: none;
  display: flex;
  align-items: center;
  justify-content: center;
  width: 76px;
  height: 76px;
  border: 2px solid #262626;
  border-radius: 50%;
}

.pg {
  width: 40px;
  height: 42px;
}

.ring.warn {
  color: #ab8535;
}

.ring.warn svg {
  width: 40px;
  height: 40px;
}

.online {
  position: absolute;
  right: 2px;
  bottom: 1px;
  width: 17px;
  height: 17px;
  border-radius: 50%;
  background: #3c8139;
}

.crumb {
  display: flex;
  flex-direction: column;
  gap: 8px;
  margin-left: 16px;
  padding-bottom: 4px;
  line-height: 40px;
}

.crumb strong {
  font-size: 32px;
}

.crumb-store {
  width: 400px;
}

.info {
  align-self: flex-start;
  width: 34px;
  height: 34px;
  margin-top: -4px;
}

.sep {
  width: 56px;
  height: 56px;
  margin: 0 12px 0 20px;
}

.head-actions {
  display: flex;
  gap: 16px;
  margin-left: auto;
}

.head-actions button {
  gap: 14px;
  height: 72px;
  padding: 0 20px;
  border-radius: 16px;
  background: #adadad;
  color: #1f1f1f;
  font-weight: 600;
}

.head-actions svg {
  width: 40px;
  height: 40px;
  color: #96521b;
}

.tabs {
  display: flex;
  margin-top: 34px;
}

.tabs a {
  padding: 21px 31px 19px 32px;
  border-bottom: 6px solid #ab6e31;
  border-radius: 3px;
  font-weight: 400;
}

/* Content */
.content {
  position: relative;
  flex: 1;
  display: flex;
  flex-direction: column;
  gap: 32px;
  min-height: 0;
  padding: 32px 30px 0 32px;
  background: #151716;
}

.card {
  flex: none;
  padding: 20px 32px 24px;
  border-radius: 24px;
  background: #0f0f0f;
}

.checks {
  padding-bottom: 60px;
}

.card-head {
  display: flex;
  justify-content: space-between;
  margin-bottom: 32px;
}

.card-head h2 {
  margin: 0;
  font-size: 40px;
  font-weight: 500;
  line-height: 48px;
}

.card-head p {
  margin: 0;
  color: #575757;
}

.summary .card-head {
  margin-bottom: 34px;
}

.summary .card-head p {
  color: #6b6b6b;
}

.btn-group {
  display: flex;
  height: 70px;
  margin: 4px 16px 0 0;
  padding-right: 3px;
  border: 2px solid #222;
  border-radius: 35px;
}

.btn-group button {
  justify-content: center;
  width: 68px;
}

.btn-group button + button {
  border-left: 2px solid #222;
}

.btn-group svg {
  width: 34px;
  height: 34px;
}

.off {
  color: #808080;
}

.grid {
  display: grid;
  gap: 32px;
  margin-top: 32px;
}

.card-head + .grid {
  margin-top: 0;
}

.stats {
  grid-template-columns: repeat(6, 1fr);
}

.links {
  grid-template-columns: repeat(3, 1fr);
}

.people {
  grid-template-columns: repeat(2, 1fr);
}

.panel {
  border: 2px solid #212121;
  border-radius: 16px;
}

.stat {
  display: flex;
  flex-direction: column;
  gap: 38px;
  padding: 34px 24px 24px;
}

.status {
  background: linear-gradient(#a98435 8px, transparent 8px);
}

.label {
  display: flex;
  justify-content: space-between;
  align-items: center;
  height: 40px;
}

.label svg,
.link > a svg,
.link > button svg {
  width: 36px;
  height: 36px;
}

.label a {
  margin: 8px 8px 0 0;
}

.value {
  display: flex;
  align-items: center;
  gap: 12px;
  height: 84px;
}

.value strong {
  font-size: 32px;
  line-height: 48px;
}

.value .num {
  font-size: 36px;
}

.lines {
  display: flex;
  flex-direction: column;
}

small {
  font-size: 24px;
  line-height: 32px;
}

.dim {
  color: #6b6b6b;
}

.tile {
  flex: none;
  display: flex;
  align-items: center;
  justify-content: center;
  width: 76px;
  height: 76px;
  border: 2px solid #242625;
  border-radius: 16px;
  background: #151716;
}

.tile svg:not(.pg) {
  width: 44px;
  height: 44px;
}

.status .tile {
  width: 84px;
  height: 84px;
}

.status .tile svg {
  width: 60px;
  height: 60px;
}

.yellow {
  color: #ab8535;
}

.orange {
  color: #a84c20;
}

.link {
  display: flex;
  align-items: center;
  gap: 12px;
  padding: 32px;
}

.link strong {
  line-height: 40px;
}

.link > a,
.link > button {
  margin: 0 16px 0 auto;
}

/* Tags and assignees */
.field {
  position: relative;
  padding: 34px 32px 30px;
  color: #6d6d6d;
}

.field-head {
  display: flex;
  align-items: center;
  gap: 16px;
  margin-bottom: 14px;
  font-weight: 400;
}

.field-head svg {
  width: 32px;
  height: 32px;
}

.chips {
  position: relative;
  z-index: 3;
  display: flex;
  gap: 16px;
}

.chip {
  height: 44px;
  padding: 0 12px;
  border: 2px solid;
  border-radius: 22px;
  line-height: 40px;
}

.chip.red {
  border-color: #7a4a49;
  background: #482321;
  color: #e8abab;
}

.chip.purple {
  border-color: #67467a;
  background: #3a2148;
  color: #d6a3ee;
}

.chip.green {
  border-color: #47703f;
  background: #2d402b;
  color: #7bbd73;
}

.mini-avatar {
  display: block;
  width: 48px;
  height: 48px;
  margin: -4px 0;
  border-radius: 50%;
  background: #334966;
  color: #8294ad;
  font-size: 20px;
  line-height: 48px;
  text-align: center;
}

/* Tag picker */
.picker {
  position: absolute;
  z-index: 3;
  top: 131px;
  left: 33px;
  width: 548px;
  height: 640px;
  overflow: hidden;
  border: 17px solid #eb4026;
  background: #1b1b1b;
  box-shadow: 0 8px 40px rgba(60, 40, 10, 0.5);
  color: #fff;
}

.picker-search {
  display: flex;
  align-items: center;
  gap: 28px;
  height: 136px;
  padding: 0 10px 16px 16px;
  margin-right: 10px;
  border-bottom: 2px solid #575757;
}

.picker-search input {
  flex: none;
  width: 396px;
  height: 80px;
  padding: 0 22px;
  border: 2px solid #808080;
  border-radius: 8px;
}

.picker-search input::placeholder {
  color: #b0b0b0;
}

.picker-search svg {
  width: 34px;
  height: 34px;
}

.picker ul {
  margin: 4px 0 0;
  padding: 0;
  list-style: none;
}

.picker li {
  display: flex;
  align-items: center;
  height: 96px;
  padding: 0 61px 0 17px;
}

.tick {
  width: 30px;
  height: 30px;
}

.dot {
  width: 30px;
  height: 30px;
  margin: 0 35px 0 20px;
  border-radius: 50%;
}

.dot.red { background: #b83830; }
.dot.purple { background: #832da6; }
.dot.green { background: #5e9f52; }
.dot.cyan { background: #4ca9c0; }
.dot.teal { background: #3c887b; }

.picker li button {
  margin-left: auto;
  color: #c4c4c4;
}

.picker li button svg {
  width: 26px;
  height: 26px;
}

.thumb {
  position: absolute;
  top: 0;
  right: 0;
  width: 10px;
  height: 188px;
  border-radius: 0 0 0 10px;
  background: #3b3b3b;
}

/* Description and checks */
.description {
  padding: 36px 32px 40px 520px;
}

.check-list {
  border: 2px solid #3a3a3a;
  border-radius: 12px;
}

.toolbar {
  display: flex;
  justify-content: flex-end;
  padding: 16px 24px;
  border-bottom: 2px solid #3a3a3a;
}

.toolbar button {
  gap: 14px;
  height: 72px;
  padding: 0 22px;
  border: 2px solid #242424;
  border-radius: 16px;
  font-weight: 400;
}

.toolbar svg {
  width: 36px;
  height: 36px;
  color: #808080;
}

.toolbar span {
  padding: 0 12px;
  border-radius: 8px;
  background: #202020;
  font-size: 24px;
  line-height: 32px;
}

.check {
  display: grid;
  grid-template-columns: 80px 301px 1fr 560px;
  column-gap: 35px;
  padding: 15px 32px;
  color: #808080;
  font-size: 24px;
}

.check .ring {
  width: 80px;
  height: 80px;
  color: #a0a0a0;
}

.check .ring svg {
  width: 44px;
  height: 44px;
}

.check-id,
.check-desc {
  margin-top: 6px;
}

/* Brightens the area around the tag picker */
.spotlight {
  position: absolute;
  z-index: 2;
  top: 574px;
  left: 32px;
  width: calc(50% - 15px);
  height: 802px;
  backdrop-filter: brightness(1.8);
  pointer-events: none;
}
```
